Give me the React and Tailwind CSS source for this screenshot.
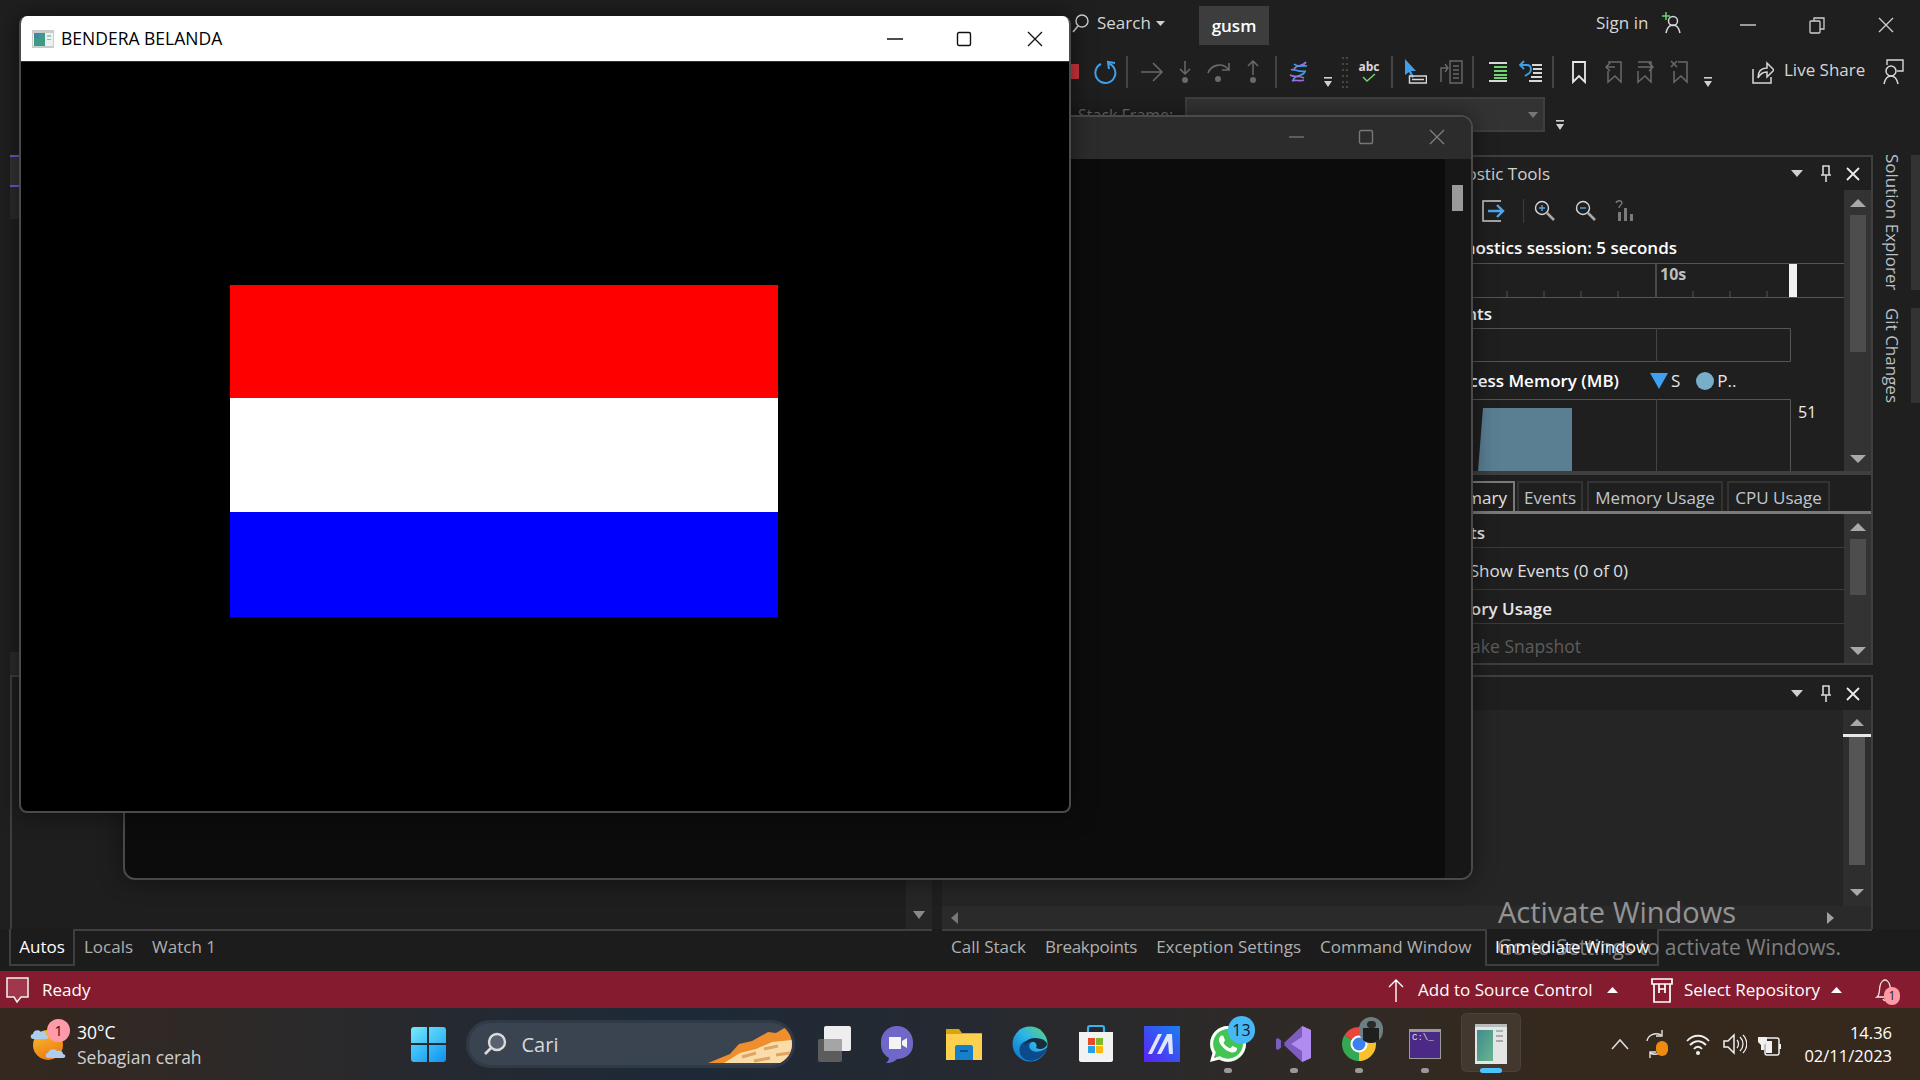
import clsx from "clsx";
import { FaWhatsapp } from "react-icons/fa";

// zero width slot, content centres on it, so the margin is the distance between icon centres
function Slot({ className, children }) {
  return <div className={clsx("w-0 flex justify-center items-center shrink-0", className)}>{children}</div>;
}

function Ico({ w = 24, h = 24, className, children }) {
  return (
    <svg width={w} height={h} viewBox={`0 0 ${w} ${h}`} fill="none" className={clsx("shrink-0", className)}>
      {children}
    </svg>
  );
}

function Tri({ down = true, w = 12, h = 7, color = "#d0d0d0" }) {
  return (
    <Ico w={w} h={h}>
      <polygon points={down ? `0,0 ${w},0 ${w / 2},${h}` : `0,${h} ${w},${h} ${w / 2},0`} fill={color} />
    </Ico>
  );
}

function Overflow() {
  return (
    <Ico w={12} h={14}>
      <rect x="2" y="1" width="8" height="1.6" fill="#d0d0d0" />
      <polygon points="2,5 10,5 6,11" fill="#d0d0d0" />
    </Ico>
  );
}

function Sep() {
  return <div className="w-[2px] h-[32px] shrink-0 bg-[#444444]" />;
}

function PanelControls() {
  return (
    <div className="flex items-center">
      <Tri />
      <Ico w={14} h={18} className="ml-[16px]">
        <path d="M4 1h6v9H4zM2 10h10M7 10v7" stroke="#d8d8d8" strokeWidth="1.6" />
      </Ico>
      <Ico w={14} h={14} className="ml-[13px]">
        <path d="M1 1l12 12M13 1L1 13" stroke="#ececec" strokeWidth="1.8" />
      </Ico>
    </div>
  );
}

function FlagWindow() {
  return (
    <div className="absolute left-[19px] top-[16px] w-[1052px] h-[797px] bg-black border-2 border-t-0 border-[#4a4a4a] rounded-lg overflow-hidden shadow-[0_0_24px_rgba(0,0,0,0.5)] flex flex-col">
      <div className="h-[46px] shrink-0 bg-white border-b border-[#333333] flex items-center relative">
        <Ico w={22} h={18} className="ml-[11px]">
          <rect x="0" y="0" width="22" height="18" fill="#c9cccb" />
          <rect x="1" y="3" width="20" height="13" fill="#eef0ef" />
          <rect x="2" y="3" width="11" height="13" fill="#3d9a86" />
          <rect x="2" y="3" width="5" height="5" fill="#4b7fa8" />
          <rect x="15" y="5" width="4" height="2" fill="#99cccc" />
          <rect x="15" y="9" width="4" height="1" fill="#aaaaaa" />
        </Ico>
        <span className="ml-[7px] w-[160px] text-[17.5px] text-black whitespace-nowrap">BENDERA BELANDA</span>
        <Slot className="ml-[674px]">
          <Ico w={16} h={16}><path d="M0 8h16" stroke="#111" strokeWidth="1.3" /></Ico>
        </Slot>
        <Slot className="ml-[69px]">
          <Ico w={16} h={16}><rect x="1.5" y="1.5" width="13" height="13" rx="1.5" stroke="#111" strokeWidth="1.4" /></Ico>
        </Slot>
        <Slot className="ml-[71px]">
          <Ico w={16} h={16}><path d="M1 1l14 14M15 1L1 15" stroke="#111" strokeWidth="1.3" /></Ico>
        </Slot>
      </div>
      <div className="ml-[209px] mt-[223px] w-[548px]">
        <div className="h-[113px] bg-[#ff0000]" />
        <div className="h-[114px] bg-white" />
        <div className="h-[105px] bg-[#0000ff]" />
      </div>
    </div>
  );
}

function ConsoleWindow() {
  return (
    <div className="absolute left-[123px] top-[115px] w-[1350px] h-[765px] bg-[#0c0c0c] border-2 border-[#4a4a4a] rounded-xl overflow-hidden shadow-[0_0_24px_rgba(0,0,0,0.45)] flex flex-col">
      <div className="h-[42px] shrink-0 bg-[#2c2c2c] flex items-center pb-[2px]">
        <Slot className="ml-[1172px]">
          <Ico w={16} h={16}><path d="M0 8h15" stroke="#6e6e6e" strokeWidth="1.3" /></Ico>
        </Slot>
        <Slot className="ml-[69px]">
          <Ico w={16} h={16}><rect x="1.5" y="1.5" width="13" height="13" rx="1.5" stroke="#777777" strokeWidth="1.4" /></Ico>
        </Slot>
        <Slot className="ml-[71px]">
          <Ico w={16} h={16}><path d="M1 1l14 14M15 1L1 15" stroke="#808080" strokeWidth="1.3" /></Ico>
        </Slot>
      </div>
      <div className="flex-1 flex justify-end">
        <div className="w-[26px] bg-[#171717] pt-[26px] pl-[7px]">
          <div className="w-[11px] h-[26px] bg-[#9a9a9a]" />
        </div>
      </div>
    </div>
  );
}

function TitleRow() {
  return (
    <div className="h-[50px] shrink-0 flex items-start text-[#d6d6d6]">
      <div className="w-[1070px] shrink-0" />
      <div className="h-[46px] flex items-center">
        <Ico w={20} h={20}>
          <circle cx="12" cy="8" r="6" stroke="#d0d0d0" strokeWidth="1.4" />
          <path d="M8 13l-5 6" stroke="#d0d0d0" strokeWidth="1.6" />
        </Ico>
        <span className="ml-[7px] w-[59px] text-[17px] whitespace-nowrap">Search</span>
        <Tri w={9} h={5} />
      </div>
      <div className="ml-[34px] mt-[6px] w-[70px] h-[39px] bg-[#3d3d3d] flex items-center justify-center font-semibold text-white text-[17px]">
        gusm
      </div>
      <div className="ml-[327px] h-[46px] flex items-center w-[56px] text-[17px] whitespace-nowrap">Sign in</div>
      <div className="h-[46px] flex items-center ml-[9px]">
        <Ico w={22} h={24}>
          <path d="M1 5h8M5 1v8" stroke="#6fd46f" strokeWidth="1.5" />
          <circle cx="12" cy="10" r="4.5" stroke="#d8d8d8" strokeWidth="1.5" />
          <path d="M5 22c1-5 3-8 7-8s6 3 7 8" stroke="#d8d8d8" strokeWidth="1.5" />
        </Ico>
      </div>
      <div className="h-[50px] flex items-center">
        <Slot className="ml-[65px]">
          <Ico w={16} h={16}><path d="M0 8h16" stroke="#d0d0d0" strokeWidth="1.4" /></Ico>
        </Slot>
        <Slot className="ml-[69px]">
          <Ico w={16} h={18}>
            <rect x="1" y="5" width="10" height="12" rx="1" stroke="#d0d0d0" strokeWidth="1.3" />
            <path d="M5 5V2h10v11h-4" stroke="#d0d0d0" strokeWidth="1.3" />
          </Ico>
        </Slot>
        <Slot className="ml-[69px]">
          <Ico w={16} h={16}><path d="M1 1l14 14M15 1L1 15" stroke="#d0d0d0" strokeWidth="1.3" /></Ico>
        </Slot>
      </div>
    </div>
  );
}

function Toolbar() {
  const dim = "#6a6a6a";
  const light = "#d8d8d8";
  return (
    <div className="h-[43px] shrink-0 flex items-center text-[#d6d6d6]">
      <Slot className="ml-[1074px]">
        <div className="w-[9px] h-[15px] shrink-0 bg-[#d1343b] rounded-[1px]" />
      </Slot>
      <Slot className="ml-[31px]">
        <Ico>
          <path d="M8 4A10 10 0 1 0 15.5 3.5" stroke="#3f9fe8" strokeWidth="2" />
          <path d="M22 3L15 2l1 7" stroke="#3f9fe8" strokeWidth="2" />
        </Ico>
      </Slot>
      <Slot className="ml-[22px]"><Sep /></Slot>
      <Slot className="ml-[25px]">
        <Ico><path d="M1 12h20M13 3l9 9-9 9" stroke={dim} strokeWidth="1.5" /></Ico>
      </Slot>
      <Slot className="ml-[33px]">
        <Ico><path d="M12 1v13M7 9l5 5 5-5" stroke={dim} strokeWidth="1.5" /><circle cx="12" cy="20" r="3" fill={dim} /></Ico>
      </Slot>
      <Slot className="ml-[34px]">
        <Ico><path d="M1 13c3-8 14-11 20-4M22 3v7h-7" stroke={dim} strokeWidth="1.6" /><circle cx="11" cy="19" r="3" fill={dim} /></Ico>
      </Slot>
      <Slot className="ml-[34px]">
        <Ico><path d="M12 15V1M7 6l5-5 5 5" stroke={dim} strokeWidth="1.5" /><circle cx="12" cy="20" r="3" fill={dim} /></Ico>
      </Slot>
      <Slot className="ml-[23px]"><Sep /></Slot>
      <Slot className="ml-[23px]">
        <Ico>
          <path d="M19 2c-3 5-9 2-12 7" stroke="#9a6fe0" strokeWidth="1.7" />
          <path d="M7 4c4 4 9 1 13 2M4 10c3-2 7 3 15 1" stroke="#3f9fe8" strokeWidth="1.7" />
          <path d="M18 12c-3 5-9 2-12 8" stroke="#3f9fe8" strokeWidth="1.7" />
          <path d="M3 15c5 3 9 0 14 3M5 21c3-2 8 1 12-1" stroke="#9a6fe0" strokeWidth="1.7" />
        </Ico>
      </Slot>
      <Slot className="ml-[29px] pt-[22px]"><Overflow /></Slot>
      <Slot className="ml-[17px]">
        <Ico w={8} h={32}>
          {[2, 8, 14, 20, 26, 31].map((y) => (
            <g key={y}>
              <circle cx="2" cy={y} r="1" fill="#555555" />
              <circle cx="6" cy={y} r="1" fill="#555555" />
            </g>
          ))}
        </Ico>
      </Slot>
      <Slot className="ml-[24px]">
        <div className="flex flex-col items-center">
          <span className="text-[12px] leading-[12px] font-bold text-[#d8d8d8]">abc</span>
          <Ico w={14} h={10}><path d="M1 4l4 4 8-7" stroke="#6fd46f" strokeWidth="1.5" /></Ico>
        </div>
      </Slot>
      <Slot className="ml-[23px]"><Sep /></Slot>
      <Slot className="ml-[23px]">
        <Ico w={24} h={26}>
          <path d="M2 0v16l4-3 3 6 2-1-3-6 5 0z" fill="#3f9fe8" />
          <rect x="6.5" y="17" width="17" height="7" stroke={light} strokeWidth="1.5" />
          <path d="M9 20.5h12" stroke={light} strokeWidth="1.5" />
        </Ico>
      </Slot>
      <Slot className="ml-[37px]">
        <Ico w={24} h={24}>
          <path d="M1 22V8h6M5 4L8 8l-3 4" stroke={dim} strokeWidth="1.4" />
          <path d="M10 1h12v22H10zM13 6h6M13 10h6M13 14h6M13 18h6" stroke={dim} strokeWidth="1.4" />
        </Ico>
      </Slot>
      <Slot className="ml-[21px]"><Sep /></Slot>
      <Slot className="ml-[25px]">
        <Ico w={22} h={24}>
          <path d="M2 3h12M2 21h12" stroke={light} strokeWidth="1.8" />
          <path d="M7 7h13M7 11h13M7 15h13M7 18h13" stroke="#6fd46f" strokeWidth="1.8" />
          <path d="M13 3h7M13 21h7" stroke={light} strokeWidth="1.8" />
        </Ico>
      </Slot>
      <Slot className="ml-[33px]">
        <Ico w={24} h={24}>
          <path d="M5 1L1 5l4 4M1 5h7c5 0 5 7 1 9l-3 2" stroke="#3f9fe8" strokeWidth="1.8" />
          <path d="M13 5h10M14 9h9M14 13h9M12 17h11M10 21h13" stroke={light} strokeWidth="1.8" />
        </Ico>
      </Slot>
      <Slot className="ml-[22px]"><Sep /></Slot>
      <Slot className="ml-[26px]">
        <Ico w={16} h={24}><path d="M2 2h12v20l-6-6-6 6z" stroke="#e8e8e8" strokeWidth="1.8" /></Ico>
      </Slot>
      <Slot className="ml-[35px]">
        <Ico w={18} h={24}><path d="M3 2h13v20l-6-6-7 6V11M1 7h9M5 3L1 7l4 4" stroke={dim} strokeWidth="1.5" /></Ico>
      </Slot>
      <Slot className="ml-[31px]">
        <Ico w={18} h={24}><path d="M2 2h13v20l-6-6-7 6V11M2 7h15M13 3l4 4-4 4" stroke={dim} strokeWidth="1.5" /></Ico>
      </Slot>
      <Slot className="ml-[35px]">
        <Ico w={20} h={24}><path d="M8 2h9v20l-6-6-7 6V11M1 1l6 6M7 1L1 7" stroke={dim} strokeWidth="1.5" /></Ico>
      </Slot>
      <Slot className="ml-[28px] pt-[22px]"><Overflow /></Slot>
      <Slot className="ml-[55px]">
        <Ico w={22} h={24}>
          <path d="M1 9v14h18v-6" stroke={light} strokeWidth="1.5" />
          <path d="M6 18c0-6 3-10 9-10V3l7 7-7 7v-5c-4 0-7 2-9 6z" stroke={light} strokeWidth="1.5" />
        </Ico>
      </Slot>
      <span className="ml-[21px] mb-[3px] w-[80px] text-[17px] whitespace-nowrap">Live Share</span>
      <Slot className="ml-[29px]">
        <Ico w={22} h={26}>
          <path d="M5 6V1h16v11h-6" stroke={light} strokeWidth="1.4" />
          <circle cx="9" cy="12" r="5" stroke={light} strokeWidth="1.5" />
          <path d="M2 25c1-5 3-8 7-8s6 3 7 8" stroke={light} strokeWidth="1.5" />
        </Ico>
      </Slot>
    </div>
  );
}

function StackFrameRow() {
  return (
    <div className="h-[62px] shrink-0 flex items-start">
      <div className="w-[1078px] shrink-0" />
      <span className="w-[107px] text-[16px] text-[#6e6e6e] mt-[10px] whitespace-nowrap overflow-hidden">Stack Frame:</span>
      <div className="mt-[4px] w-[360px] h-[35px] bg-[#333333] border-2 border-[#3f3f3f] flex items-center justify-end pr-[5px]">
        <Tri w={10} h={6} color="#777777" />
      </div>
      <div className="ml-[9px] mt-[26px]"><Overflow /></div>
    </div>
  );
}

function Scrollbar({ thumbTop, thumbHeight }) {
  return (
    <div className="w-[27px] shrink-0 bg-[#333333] flex flex-col items-center h-full">
      <div className={thumbTop}><Tri down={false} w={16} h={8} color="#a8a8a8" /></div>
      <div className={clsx("w-[16px] bg-[#4d4d4d]", thumbHeight)} />
      <div className="flex-1" />
      <div className="mb-[8px]"><Tri w={16} h={8} color="#a8a8a8" /></div>
    </div>
  );
}

function DiagnosticsPanel() {
  const row = "w-[419px] flex items-center whitespace-nowrap";
  return (
    <div className="w-[448px] h-[510px] border-t-2 border-r-2 border-[#3f3f3f] flex flex-col text-[17px]">
      <div className="h-[33px] shrink-0 flex items-center">
        <div className="w-[125px] flex justify-end whitespace-nowrap text-[#d0d0d0]">Diagnostic Tools</div>
        <div className="ml-auto mr-[11px]"><PanelControls /></div>
      </div>
      <div className="h-[281px] shrink-0 flex">
        <div className="w-[419px] shrink-0 flex flex-col">
          <div className="h-[42px] flex items-center">
            <Slot className="ml-[68px]">
              <Ico w={24} h={24}>
                <path d="M20 2H2v20h18" stroke="#cfcfcf" strokeWidth="1.5" />
                <path d="M7 12h15M16 6l6 6-6 6" stroke="#4ea6ee" strokeWidth="2.4" />
              </Ico>
            </Slot>
            <Slot className="ml-[30px]"><div className="w-px h-[24px] shrink-0 bg-[#3c3c3c]" /></Slot>
            <Slot className="ml-[22px]">
              <Ico w={22} h={22}>
                <circle cx="8" cy="8" r="6.5" stroke="#d8d8d8" strokeWidth="1.4" />
                <path d="M5 8h6M8 5v6" stroke="#4ea6ee" strokeWidth="1.4" />
                <path d="M13 13l7 7" stroke="#a8a8a8" strokeWidth="2.6" />
              </Ico>
            </Slot>
            <Slot className="ml-[41px]">
              <Ico w={22} h={22}>
                <circle cx="8" cy="8" r="6.5" stroke="#d8d8d8" strokeWidth="1.4" />
                <path d="M5 8h6" stroke="#4ea6ee" strokeWidth="1.4" />
                <path d="M13 13l7 7" stroke="#a8a8a8" strokeWidth="2.6" />
              </Ico>
            </Slot>
            <Slot className="ml-[39px]">
              <Ico w={20} h={24}>
                <path d="M1 4c1-3 6-3 6 0 0 2-3 2-3 5" stroke="#7a7a7a" strokeWidth="1.3" />
                <path d="M3 13h3v9H3zM9 9h3v13H9zM15 15h3v7h-3z" fill="#7a7a7a" />
              </Ico>
            </Slot>
          </div>
          <div className="h-[31px] flex items-center">
            <div className="w-[252px] flex justify-end font-semibold text-white whitespace-nowrap">
              Diagnostics session: 5 seconds
            </div>
          </div>
          <svg width="419" height="35" className="shrink-0">
            <path d="M0 .5h419M0 34.5h419" stroke="#555555" />
            <path d="M231 0v35" stroke="#4a4a4a" strokeWidth="2" />
            <path d="M82 28v7M119 28v7M156 28v7M193 28v7M268 28v7M305 28v7M342 28v7" stroke="#555555" />
            <rect x="364" y="1" width="8" height="33" fill="#f2f2f2" />
            <text x="235" y="17" fill="#bdbdbd" fontSize="16" fontWeight="700">10s</text>
          </svg>
          <div className="h-[30px] flex items-center pt-[2px]">
            <div className="w-[67px] flex justify-end font-semibold text-white">Events</div>
          </div>
          <svg width="419" height="35" fill="none" className="shrink-0">
            <path d="M0 .5h365.5v33H0" stroke="#555555" />
            <path d="M231.5 0v34" stroke="#444444" />
          </svg>
          <div className="h-[36px] flex items-center">
            <div className="w-[194px] flex justify-end font-semibold text-white whitespace-nowrap">Process Memory (MB)</div>
            <Ico w={18} h={16} className="ml-[31px]"><polygon points="0,0 18,0 9,16" fill="#3f9ff0" /></Ico>
            <span className="ml-[3px] text-[#e8e8e8]">S</span>
            <div className="ml-[16px] w-[18px] h-[18px] rounded-full bg-[#78aec8]" />
            <span className="ml-[3px] text-[#e8e8e8]">P..</span>
          </div>
          <svg width="419" height="72" fill="none" className="shrink-0">
            <polygon points="53,72 58,9 147,9 147,72" fill="#5a7f93" />
            <path d="M0 .5h365.5V72" stroke="#555555" />
            <path d="M231.5 0v72" stroke="#444444" />
            <text x="373" y="19" fill="#ececec" fontSize="16">51</text>
          </svg>
        </div>
        <Scrollbar thumbTop="pt-[9px] pb-[8px]" thumbHeight="h-[137px]" />
      </div>
      <div className="h-[4px] shrink-0 bg-[#3f3f3f]" />
      <div className="h-[36px] shrink-0 flex items-end pt-[6px] text-[#bfc7d0]">
        <div className="w-[90px] h-full pt-[2px] border-2 border-b-0 border-[#7a7a7a] flex items-center justify-end pr-[6px] text-[#e8e8e8] whitespace-nowrap">
          Summary
        </div>
        <div className="ml-[2px] w-[66px] h-full pt-[2px] border-2 border-b-0 border-[#333333] flex items-center justify-center">Events</div>
        <div className="ml-[4px] w-[136px] h-full pt-[2px] border-2 border-b-0 border-[#333333] flex items-center justify-center whitespace-nowrap">Memory Usage</div>
        <div className="ml-[4px] w-[103px] h-full pt-[2px] border-2 border-b-0 border-[#333333] flex items-center justify-center whitespace-nowrap">CPU Usage</div>
      </div>
      <div className="h-[3px] shrink-0 bg-[#7a7a7a]" />
      <div className="h-[149px] shrink-0 flex">
        <div className="w-[419px] shrink-0 flex flex-col">
          <div className={clsx(row, "h-[34px] pt-[4px] border-b border-[#3a3a3a]")}>
            <div className="w-[60px] flex justify-end font-semibold text-[#e8e8e8]">Events</div>
          </div>
          <div className={clsx(row, "h-[42px] pt-[4px] border-b border-[#3a3a3a]")}>
            <div className="w-[203px] flex justify-end text-[#e0e0e0]">Show Events (0 of 0)</div>
          </div>
          <div className={clsx(row, "h-[34px] pt-[4px] border-b border-[#3a3a3a]")}>
            <div className="w-[127px] flex justify-end font-semibold text-[#e8e8e8]">Memory Usage</div>
          </div>
          <div className={clsx(row, "h-[39px] pt-[6px]")}>
            <div className="w-[156px] flex justify-end text-[17.5px] text-[#5c5c5c]">Take Snapshot</div>
          </div>
        </div>
        <Scrollbar thumbTop="pt-[9px] pb-[8px]" thumbHeight="h-[56px]" />
      </div>
      <div className="h-[2px] shrink-0 bg-[#3f3f3f]" />
    </div>
  );
}

function LeftStrip() {
  return (
    <div className="w-[9px] ml-[10px] flex flex-col">
      <div className="h-[2px] bg-[#6a5acd]" />
      <div className="h-[31px] bg-[#333333]" />
      <div className="h-[2px] bg-[#6a5acd]" />
      <div className="h-[35px] bg-[#2b2b2b]" />
      <div className="h-[470px]" />
      <div className="h-[25px] bg-[#2b2b2b]" />
    </div>
  );
}

function BottomPanels() {
  return (
    <div className="h-[254px] shrink-0 flex">
      <div className="ml-[10px] w-[922px] border-l-2 border-t-2 border-[#3f3f3f] bg-[#1e1e1e] flex justify-end">
        <div className="w-[26px] bg-[#262626] flex flex-col justify-end items-center pb-[10px]">
          <Tri w={12} h={8} color="#8a8a8a" />
        </div>
      </div>
      <div className="ml-[10px] w-[931px] border-t-2 border-r-2 border-[#3f3f3f] flex flex-col">
        <div className="h-[33px] shrink-0 flex justify-end items-center pr-[11px]"><PanelControls /></div>
        <div className="flex-1 flex min-h-0 bg-[#252525]">
          <div className="flex-1" />
          <div className="w-[28px] bg-[#2e2e2e] flex flex-col items-center">
            <div className="h-[24px] flex items-center"><Tri down={false} w={14} h={7} color="#a8a8a8" /></div>
            <div className="w-full h-[3px] bg-[#e8e8e8]" />
            <div className="w-[16px] h-[128px] bg-[#555555]" />
            <div className="flex-1 flex items-center pt-[14px]"><Tri w={14} h={7} color="#a8a8a8" /></div>
          </div>
        </div>
        <div className="h-[23px] shrink-0 bg-[#2a2a2a] flex items-center justify-between pl-[9px] pr-[37px]">
          <Ico w={7} h={12}><polygon points="7,0 7,12 0,6" fill="#777777" /></Ico>
          <Ico w={7} h={12}><polygon points="0,0 0,12 7,6" fill="#a0a0a0" /></Ico>
        </div>
      </div>
    </div>
  );
}

function SideTabs() {
  return (
    <div className="w-[47px] shrink-0 flex flex-col text-[17px] text-[#b8c0c8]">
      <div className="h-[135px] flex">
        <div className="w-[38px] flex items-center justify-center [writing-mode:vertical-rl] whitespace-nowrap">Solution Explorer</div>
        <div className="w-[9px] bg-[#333333]" />
      </div>
      <div className="h-[18px]" />
      <div className="h-[95px] flex">
        <div className="w-[38px] flex items-center justify-center [writing-mode:vertical-rl] whitespace-nowrap">Git Changes</div>
        <div className="w-[9px] bg-[#333333]" />
      </div>
    </div>
  );
}

function TabsRow() {
  const tab = "px-[8px] whitespace-nowrap text-[#b0b0b0]";
  return (
    <div className="h-[42px] shrink-0 bg-[#1c1c1c] flex text-[17px]">
      <div className="ml-[9px] w-[66px] mb-[5px] border-x-2 border-b-2 border-[#3f3f3f] flex items-center justify-center text-white">Autos</div>
      <div className="w-[857px] border-t-2 border-[#3f3f3f] flex items-center pl-[1px] pb-[8px] gap-[3px]">
        <span className={tab}>Locals</span>
        <span className={tab}>Watch 1</span>
      </div>
      <div className="ml-[10px] w-[543px] border-t-2 border-[#3f3f3f] flex items-center pl-[1px] pb-[8px] gap-[3px]">
        <span className={tab}>Call Stack</span>
        <span className={clsx(tab, "tracking-[-0.3px]")}>Breakpoints</span>
        <span className={tab}>Exception Settings</span>
        <span className={tab}>Command Window</span>
      </div>
      <div className="w-[174px] mb-[5px] border-x-2 border-b-2 border-[#3f3f3f] flex items-center justify-center text-white whitespace-nowrap">Immediate Window</div>
      <div className="w-[213px] border-t-2 border-[#3f3f3f]" />
    </div>
  );
}

function StatusBar() {
  return (
    <div className="h-[37px] shrink-0 bg-[#851b2e] flex items-center text-white text-[17px]">
      <Ico w={24} h={26} className="ml-[6px]">
        <path d="M1 1h21v19h-7l-4 5-3-5H1z" fill="#a0374a" stroke="#f2f2f2" strokeWidth="1.5" />
      </Ico>
      <span className="ml-[12px] w-[1346px]">Ready</span>
      <Ico w={16} h={24}><path d="M8 24V2M1 9l7-7 7 7" stroke="#fff" strokeWidth="1.4" /></Ico>
      <span className="ml-[14px] w-[189px] whitespace-nowrap">Add to Source Control</span>
      <Tri down={false} w={11} h={6} color="#fff" />
      <Ico w={22} h={26} className="ml-[33px]">
        <path d="M1 2h20v5H1zM3 7v18h16V7M8 7v9M14 7v9M8 12h6" stroke="#fff" strokeWidth="1.7" />
      </Ico>
      <span className="ml-[11px] w-[147px] whitespace-nowrap">Select Repository</span>
      <Tri down={false} w={11} h={6} color="#fff" />
      <div className="relative ml-[33px]">
        <Ico w={20} h={26}><path d="M2 20c3-2 2-6 3-11s4-6 5-6 4 1 5 6 0 9 3 11z M8 22c1 2 3 2 4 0" stroke="#e8e8e8" strokeWidth="1.3" /></Ico>
        <div className="absolute left-[9px] top-[10px] w-[16px] h-[18px] rounded-full bg-[#ff99a4] text-[#222222] text-[12px] flex items-center justify-center">1</div>
      </div>
    </div>
  );
}

function WinLogo() {
  return (
    <div className="w-[35px] h-[35px] shrink-0 grid grid-cols-2 gap-[2px]">
      <div className="rounded-tl-[3px] bg-linear-to-br from-[#7ae8ff] to-[#3cc4f5]" />
      <div className="rounded-tr-[3px] bg-linear-to-br from-[#5fd8fb] to-[#2eb4f2]" />
      <div className="rounded-bl-[3px] bg-linear-to-br from-[#4bcdf8] to-[#1ea3f2]" />
      <div className="rounded-br-[3px] bg-linear-to-br from-[#38bdf8] to-[#118ff0]" />
    </div>
  );
}

function SearchPill() {
  return (
    <div className="relative w-[329px] h-[48px] shrink-0 rounded-full bg-[#3a4350] border-[3px] border-[#303a47] flex items-center overflow-hidden">
      <Ico w={24} h={24} className="ml-[14px]">
        <circle cx="14" cy="10" r="8" stroke="#dcdcdc" strokeWidth="2.4" fill="#596270" />
        <path d="M8 16l-6 6" stroke="#dcdcdc" strokeWidth="2.6" />
      </Ico>
      <span className="ml-[15px] pt-[2px] text-[20px] text-[#d8d8d8]">Cari</span>
      <svg width="84" height="36" viewBox="0 0 84 36" className="absolute right-[0px] bottom-[2px]">
        <path d="M0 36L22 27 31 17 44 14 60 5 68 6 78 0 84 6V36z" fill="#ef8e2c" />
        <path d="M16 36L32 26 48 22 64 15 84 13V36z" fill="#f9dca8" />
        <path d="M34 30l14-4M56 22l14-3M46 34l16-3M68 28l14-2" stroke="#dfa468" strokeWidth="3" />
      </svg>
    </div>
  );
}

function TaskIcon({ left, dot, active, children }) {
  return (
    <Slot className={left}>
      <div className="relative w-[60px] h-[58px] flex items-center justify-center shrink-0">
        {children}
        {dot && <div className="absolute top-[53px] w-[8px] h-[5px] rounded-full bg-[#999999]" />}
        {active && <div className="absolute top-[53px] w-[22px] h-[5px] rounded-full bg-[#4cc2ff]" />}
      </div>
    </Slot>
  );
}

function WeatherIcon() {
  return (
    <div className="relative ml-[30px] w-[40px] h-[42px] shrink-0">
      <svg width="40" height="42" viewBox="0 0 40 42" className="absolute left-0 top-0">
        <defs>
          <linearGradient id="sunA" x1="0" y1="0" x2="0.4" y2="1">
            <stop offset="0" stopColor="#f9c22e" />
            <stop offset="1" stopColor="#ee7d14" />
          </linearGradient>
        </defs>
        <circle cx="18" cy="22" r="15" fill="url(#sunA)" />
        <path d="M3 16c-3 0-3-5 0-5 0-4 6-5 8-2 3-1 6 1 5 3 3 0 3 4 0 4z" fill="#aecdee" />
        <path d="M18 35c-3 0-3-5 0-5 1-4 7-5 9-2 4-1 6 1 6 3 3 0 3 4 0 4z" fill="#aecdee" />
      </svg>
      <div className="absolute left-[17px] top-[-4px] w-[23px] h-[23px] rounded-full bg-[#ff9aaa] text-[#1a1a1a] text-[15px] flex items-center justify-center">1</div>
    </div>
  );
}

function EdgeIcon() {
  return (
    <svg width="36" height="36" viewBox="0 0 36 36">
      <defs>
        <linearGradient id="edgeA" x1="0" y1="1" x2="1" y2="0">
          <stop offset="0" stopColor="#0a6cc4" />
          <stop offset="0.55" stopColor="#2bb5e8" />
          <stop offset="1" stopColor="#63d66f" />
        </linearGradient>
      </defs>
      <circle cx="18" cy="18" r="17.5" fill="url(#edgeA)" />
      <path d="M35.5 21c-2 9-12 16-21 13-7-2-9-11-5-16 3-4 9-4 12-2-3 0-5 2-4 6 2 5 12 5 18-1z" fill="#0c4a8c" />
      <path d="M35 18c0-2-4-6-12-6-6 0-10 3-11 7 3-3 7-4 10-3 3 1 3 5 2 6 4 2 10 1 11-4z" fill="#1c2c3f" />
    </svg>
  );
}

function ChromeIcon() {
  return (
    <div className="relative">
      <svg width="36" height="36" viewBox="0 0 36 36">
        <path d="M18 18L3.3 9.5A17 17 0 0 1 32.7 9.5Z" fill="#e8453c" />
        <path d="M18 18L32.7 9.5A17 17 0 0 1 18 35Z" fill="#fbc02d" />
        <path d="M18 18L18 35A17 17 0 0 1 3.3 9.5Z" fill="#34a853" />
        <circle cx="18" cy="18" r="8.5" fill="#fff" />
        <circle cx="18" cy="18" r="6.5" fill="#3b82f0" />
      </svg>
      <div className="absolute left-[18px] top-[-9px] w-[24px] h-[26px] rounded-full bg-[#6d7f82] overflow-hidden flex flex-col items-center">
        <div className="mt-[4px] w-[9px] h-[8px] rounded-full bg-[#2a2a2a]" />
        <div className="w-[16px] h-[16px] bg-[#1f1f1f]" />
      </div>
    </div>
  );
}

function VsIcon() {
  return (
    <svg width="36" height="38" viewBox="0 0 36 38">
      <path d="M26 1L35 5V33L26 37L8 20L2 25L0 24V14L2 13L8 18z" fill="#7d5cc0" />
      <path d="M26 1L35 5V33L26 37V26L15 19L26 12z" fill="#b08cf0" />
      <path d="M5 15.5V22.5L9 19z" fill="#2a2a3a" />
    </svg>
  );
}

function Taskbar() {
  return (
    <div className="relative h-[72px] shrink-0 flex items-center text-white bg-linear-to-r from-[#35281e] from-0% via-[#1d2938] via-35% to-[#35291e] to-80%">
      <WeatherIcon />
      <div className="ml-[7px] pt-[2px] w-[130px] flex flex-col leading-[25px] whitespace-nowrap text-[17.5px]">
        <span>30°C</span>
        <span className="text-[#cfcfcf]">Sebagian cerah</span>
      </div>
      <div className="flex items-center">
        <Slot className="ml-[221px]"><WinLogo /></Slot>
        <Slot className="ml-[202px]"><SearchPill /></Slot>
        <TaskIcon left="ml-[203px]">
          <div className="relative w-[36px] h-[36px]">
            <div className="absolute left-[3px] top-[13px] w-[24px] h-[23px] rounded-[2px] bg-[#5c5c5c]" />
            <div className="absolute left-[9px] top-[0px] w-[27px] h-[25px] rounded-[2px] bg-[#eeeeee]" />
            <div className="absolute left-[9px] top-[13px] w-[18px] h-[12px] bg-[#a5a5a5]" />
          </div>
        </TaskIcon>
        <TaskIcon left="ml-[64px]">
          <svg width="34" height="38" viewBox="0 0 34 38">
            <path d="M17 1C8 1 1 8 1 17v3c0 6 4 11 8 13 0 2-1 3-3 5 6 0 9-2 11-4 9 0 16-6 16-14v-3C33 8 26 1 17 1z" fill="#6f68c9" />
            <path d="M9 12h12v12H9zM22 16l5-3v10l-5-3z" fill="#f4f4f4" />
          </svg>
        </TaskIcon>
        <TaskIcon left="ml-[67px]">
          <svg width="38" height="34" viewBox="0 0 38 34">
            <path d="M1 2h13l3 4h20v27H1z" fill="#d9a50c" />
            <path d="M1 7h36v26H1z" fill="#fdd04f" />
            <path d="M10 20c0-1 1-2 2-2h14c1 0 2 1 2 2v13H10z" fill="#1580cc" />
            <path d="M15 24h8" stroke="#0a4f85" strokeWidth="2" />
          </svg>
        </TaskIcon>
        <TaskIcon left="ml-[66px]"><EdgeIcon /></TaskIcon>
        <TaskIcon left="ml-[66px]">
          <svg width="36" height="38" viewBox="0 0 36 38">
            <path d="M10 8V3c0-1 1-2 2-2h12c1 0 2 1 2 2v5" stroke="#35b4ee" strokeWidth="2.2" fill="none" />
            <path d="M1 7h34v28c0 1-1 2-2 2H3c-1 0-2-1-2-2z" fill="#f2f2f2" />
            <rect x="10" y="13" width="7" height="7" fill="#e8492b" />
            <rect x="18" y="13" width="7" height="7" fill="#7db928" />
            <rect x="10" y="21" width="7" height="7" fill="#22a2e8" />
            <rect x="18" y="21" width="7" height="7" fill="#fbb70a" />
          </svg>
        </TaskIcon>
        <TaskIcon left="ml-[66px]">
          <svg width="36" height="36" viewBox="0 0 36 36">
            <defs>
              <linearGradient id="appA" x1="0" y1="1" x2="1" y2="0">
                <stop offset="0" stopColor="#5b22f5" />
                <stop offset="1" stopColor="#1a7ff0" />
              </linearGradient>
            </defs>
            <rect width="36" height="36" fill="url(#appA)" />
            <path d="M4 28L14 8h4L8 28zM13 28L23 8h5l1 20h-4l-1-13-7 13z" fill="#dfe6ff" />
          </svg>
        </TaskIcon>
        <TaskIcon left="ml-[66px]" dot>
          <div className="relative">
            <div className="w-[36px] h-[36px] rounded-full bg-[#43c553] flex items-center justify-center">
              <FaWhatsapp size={42} color="#ffffff" />
            </div>
            <div className="absolute left-[18px] top-[-10px] w-[27px] h-[28px] rounded-full bg-[#45b8f5] text-[#10202c] text-[16px] flex items-center justify-center">13</div>
          </div>
        </TaskIcon>
        <TaskIcon left="ml-[66px]" dot><VsIcon /></TaskIcon>
        <TaskIcon left="ml-[65px]" dot><ChromeIcon /></TaskIcon>
        <TaskIcon left="ml-[66px]" dot>
          <div className="w-[32px] h-[30px] bg-[#4b2a86] border-t-[3px] border-x border-b border-[#9a9a9a] text-[9px] leading-[12px] text-[#dddddd] pl-[2px] font-['Liberation_Mono',monospace]">
            C:\_
          </div>
        </TaskIcon>
        <TaskIcon left="ml-[66px]" active>
          <div className="absolute top-[-2px] w-[60px] h-[59px] rounded-md bg-[#ffffff12] border border-[#ffffff0d]" />
          <div className="relative w-[32px] h-[40px] bg-[#e4e6e6] border-t-[3px] border-[#b9bcbc] flex pl-[2px] pt-[3px] pb-[3px]">
            <div className="w-[16px] h-full bg-linear-to-br from-[#3f8c8c] to-[#69b58e]" />
            <div className="ml-[3px] flex flex-col gap-[3px]">
              <div className="w-[7px] h-[2px] bg-[#99bbbb]" />
              <div className="w-[7px] h-[2px] bg-[#aaaaaa]" />
              <div className="w-[7px] h-[2px] bg-[#aaaaaa]" />
            </div>
          </div>
        </TaskIcon>
        <Slot className="ml-[129px]">
          <Ico w={18} h={12}><path d="M1 11L9 2l8 9" stroke="#e0e0e0" strokeWidth="1.5" /></Ico>
        </Slot>
        <Slot className="ml-[36px]">
          <div className="relative">
            <Ico w={24} h={28}>
              <path d="M3 11c1-6 8-9 14-6M20 17c-1 6-8 9-14 6" stroke="#e4e4e4" strokeWidth="1.4" />
              <path d="M18 0v6h-6M6 28v-6h6" stroke="#e4e4e4" strokeWidth="1.4" />
            </Ico>
            <div className="absolute left-[12px] top-[11px] w-[12px] h-[15px] rounded-full bg-[#ee8a12]" />
          </div>
        </Slot>
        <Slot className="ml-[42px]">
          <Ico w={24} h={22}>
            <path d="M1 8c6-7 16-7 22 0M4 12c5-5 11-5 16 0M8 16c2-3 6-3 8 0" stroke="#f0f0f0" strokeWidth="1.8" />
            <circle cx="12" cy="20" r="2" fill="#f0f0f0" />
          </Ico>
        </Slot>
        <Slot className="ml-[37px]">
          <Ico w={24} h={22}>
            <path d="M1 8h4l6-6v18l-6-6H1z" stroke="#f0f0f0" strokeWidth="1.5" />
            <path d="M14 7c2 2 2 6 0 8M17 4c4 4 4 10 0 14M20 2c5 5 5 13 0 18" stroke="#f0f0f0" strokeWidth="1.3" />
          </Ico>
        </Slot>
        <Slot className="ml-[34px]">
          <Ico w={24} h={26}>
            <path d="M3 0v6M8 0v6M1 6h9v5l-3 3v5H4v-5L1 11z" fill="#f0f0f0" />
            <rect x="8" y="7" width="14" height="17" rx="2" stroke="#f0f0f0" strokeWidth="1.5" />
            <rect x="9" y="10" width="6" height="12" fill="#f0f0f0" />
            <path d="M23 13v5" stroke="#f0f0f0" strokeWidth="2" />
          </Ico>
        </Slot>
      </div>
      <div className="ml-auto mr-[28px] flex flex-col items-end leading-[23px] text-[16.5px]">
        <span>14.36</span>
        <span>02/11/2023</span>
      </div>
    </div>
  );
}

export default function App() {
  return (
    <div className="relative w-[1920px] h-[1080px] overflow-hidden bg-[#1f1f1f] flex flex-col font-['Open_Sans',sans-serif] text-[#e0e0e0]">
      <TitleRow />
      <Toolbar />
      <StackFrameRow />
      <div className="h-[774px] shrink-0 flex">
        <div className="w-[1873px] shrink-0 flex flex-col">
          <div className="h-[520px] shrink-0 flex justify-between">
            <LeftStrip />
            <DiagnosticsPanel />
          </div>
          <BottomPanels />
        </div>
        <SideTabs />
      </div>
      <TabsRow />
      <StatusBar />
      <Taskbar />
      <ConsoleWindow />
      <FlagWindow />
      <div className="absolute left-[1498px] top-[894px] text-[29px] leading-[36px] text-[#ffffff80] whitespace-nowrap">Activate Windows</div>
      <div className="absolute left-[1497px] top-[934px] text-[21px] leading-[26px] text-[#ffffff70] whitespace-nowrap">Go to Settings to activate Windows.</div>
    </div>
  );
}
